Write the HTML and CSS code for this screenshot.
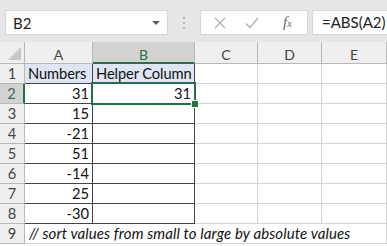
FILE: index.html
```html
<!DOCTYPE html>
<html lang="en">

<head>
    <meta charset="UTF-8">
    <title>Sheet</title>
    <link rel="stylesheet" href="styles.css">
</head>

<body>
    <div class="bar">
        <div class="namebox"><span>B2</span><i class="caret"></i></div>
        <div class="grip">
            <svg width="3" height="12" viewBox="0 0 3 12"><rect x="0" y="0" width="2" height="2" fill="#b5b5b5"/><rect x="0" y="5" width="2" height="2" fill="#b5b5b5"/><rect x="0" y="10" width="2" height="2" fill="#b5b5b5"/></svg>
        </div>
        <div class="fnbox">
            <svg class="ico" width="12" height="12" viewBox="0 0 12 12"><path d="M1 1 L11 11 M11 1 L1 11" stroke="#b0b0b0" stroke-width="1.3" fill="none"/></svg>
            <svg class="ico" width="14" height="12" viewBox="0 0 14 12"><path d="M1 6.5 L5 10.5 L13 1" stroke="#b0b0b0" stroke-width="1.3" fill="none"/></svg>
            <span class="fx">f<sub>x</sub></span>
        </div>
        <div class="formula">=ABS(A2)</div>
    </div>

    <div class="sheet">
        <div class="c hd corner"><i class="tri"></i></div>
        <div class="c hd">A</div>
        <div class="c hd sel_col">B</div>
        <div class="c hd">C</div>
        <div class="c hd">D</div>
        <div class="c hd">E</div>

        <div class="c rh">1</div>
        <div class="c t head">Numbers</div>
        <div class="c t head">Helper Column</div>
        <div class="c"></div><div class="c"></div><div class="c"></div>

        <div class="c rh sel_row">2</div>
        <div class="c t num">31</div>
        <div class="c t num active">31</div>
        <div class="c"></div><div class="c"></div><div class="c"></div>

        <div class="c rh">3</div>
        <div class="c t num">15</div>
        <div class="c t"></div>
        <div class="c"></div><div class="c"></div><div class="c"></div>

        <div class="c rh">4</div>
        <div class="c t num">-21</div>
        <div class="c t"></div>
        <div class="c"></div><div class="c"></div><div class="c"></div>

        <div class="c rh">5</div>
        <div class="c t num">51</div>
        <div class="c t"></div>
        <div class="c"></div><div class="c"></div><div class="c"></div>

        <div class="c rh">6</div>
        <div class="c t num">-14</div>
        <div class="c t"></div>
        <div class="c"></div><div class="c"></div><div class="c"></div>

        <div class="c rh">7</div>
        <div class="c t num">25</div>
        <div class="c t"></div>
        <div class="c"></div><div class="c"></div><div class="c"></div>

        <div class="c rh">8</div>
        <div class="c t num">-30</div>
        <div class="c t"></div>
        <div class="c"></div><div class="c"></div><div class="c"></div>

        <div class="c rh">9</div>
        <div class="c note">// sort values from small to large by absolute values</div>
    </div>
</body>

</html>
```

FILE: styles.css
```css
* {
    margin: 0;
    padding: 0;
    box-sizing: border-box;
}

body {
    width: 387px;
    height: 246px;
    overflow: hidden;
    background: #fff;
    font-family: Lato, "Open Sans", sans-serif;
    color: #111;
}

/* formula bar */
.bar {
    display: flex;
    align-items: flex-start;
    height: 42px;
    padding: 10px 0 0 5px;
    background: #e6e6e6;
}
.namebox {
    width: 163px;
    height: 25px;
    display: flex;
    align-items: center;
    justify-content: space-between;
    padding: 0 7px 0 7px;
    background: #fff;
    border: 1px solid #d6d6d6;
    font-size: 15px;
    color: #222;
}
.caret {
    width: 0;
    height: 0;
    border-top: 4px solid #606060;
    border-left: 4px solid transparent;
    border-right: 4px solid transparent;
}
.grip {
    width: 32px;
    height: 25px;
    display: flex;
    align-items: center;
    justify-content: center;
}
.fnbox {
    width: 108px;
    height: 25px;
    display: flex;
    align-items: center;
    padding-left: 13px;
    background: #fff;
    border: 1px solid #d6d6d6;
}
.fnbox .ico {
    margin-right: 19px;
}
.fnbox .ico + .ico {
    margin-right: 24px;
}
.fx {
    font-family: "Liberation Serif", serif;
    font-style: italic;
    font-size: 15px;
    color: #666;
}
.fx sub {
    font-size: 10px;
    vertical-align: 0;
}
.formula {
    flex: 1;
    height: 25px;
    margin-left: 4px;
    padding-left: 9px;
    background: #fff;
    border: 1px solid #d6d6d6;
    border-right: none;
    font-size: 15px;
    line-height: 23px;
    color: #222;
}

/* grid */
.sheet {
    display: grid;
    grid-template-columns: 25px 68px 102px 63px 64px 65px;
    grid-template-rows: 22px repeat(9, 20px);
}
.c {
    border-right: 1px solid #d4d4d4;
    border-bottom: 1px solid #d4d4d4;
    font-size: 14.7px;
    line-height: 19px;
    padding: 0 3px;
    white-space: nowrap;
}
.hd {
    background: #efefef;
    border-color: #b8b8b8;
    text-align: center;
    font-size: 14px;
    line-height: 21px;
    padding-top: 2px;
    color: #444;
}
.corner {
    position: relative;
}
.tri {
    position: absolute;
    right: 3px;
    bottom: 3px;
    width: 0;
    height: 0;
    border-bottom: 13px solid #c8c8c8;
    border-left: 13px solid transparent;
}
.sel_col {
    background: #d2d2d2;
    color: #217346;
    border-bottom: 2px solid #217346;
}
.rh {
    background: #efefef;
    border-color: #b8b8b8;
    text-align: center;
    color: #444;
    padding: 0;
}
.sel_row {
    background: #d2d2d2;
    color: #3f6d52;
    border-right: 2px solid #217346;
}
.t {
    border-color: #444;
}
.head {
    background: #dde6f2;
    letter-spacing: -0.1px;
}
.num {
    text-align: right;
}
.active {
    position: relative;
}
.active::before {
    content: "";
    position: absolute;
    left: -2px;
    top: -2px;
    right: -2px;
    bottom: -2px;
    border: 2px solid #217346;
}
.active::after {
    content: "";
    position: absolute;
    right: -5px;
    bottom: -5px;
    width: 6px;
    height: 6px;
    background: #217346;
    border: 1px solid #fff;
}
.note {
    grid-column: 2 / 7;
    font-style: italic;
    font-size: 15px;
    letter-spacing: 0.12px;
    padding-left: 4px;
}
```
